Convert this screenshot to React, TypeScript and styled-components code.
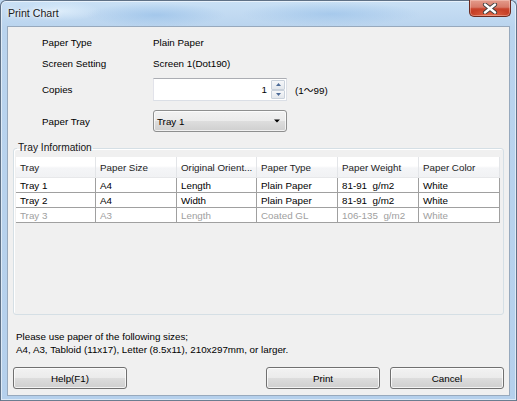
import * as React from 'react';
import styled, { createGlobalStyle } from 'styled-components';

const GlobalStyle = createGlobalStyle`
  html, body {
    margin: 0;
    padding: 0;
  }
  body {
    width: 517px;
    height: 401px;
    overflow: hidden;
    background: #bcd6ef;
  }
`;

interface Tray {
  name: string;
  size: string;
  orient: string;
  type: string;
  weight: string;
  color: string;
  disabled?: boolean;
}

const trays: Tray[] = [
  { name: 'Tray 1', size: 'A4', orient: 'Length', type: 'Plain Paper', weight: '81-91  g/m2', color: 'White' },
  { name: 'Tray 2', size: 'A4', orient: 'Width', type: 'Plain Paper', weight: '81-91  g/m2', color: 'White' },
  { name: 'Tray 3', size: 'A3', orient: 'Length', type: 'Coated GL', weight: '106-135  g/m2', color: 'White', disabled: true },
];

const headers = ['Tray', 'Paper Size', 'Original Orient...', 'Paper Type', 'Paper Weight', 'Paper Color'];

const App: React.FC = () => {
  return (
    <>
      <GlobalStyle />
      <Window>
        <TitleBar>
          <Title>Print Chart</Title>
          <CloseButton>
            <svg width="16" height="11" viewBox="0 0 16 11">
              <path
                d="M3 1.5 L13 9.5 M13 1.5 L3 9.5"
                stroke="#3b3b3b"
                strokeWidth="4.2"
                strokeLinecap="round"
              />
              <path
                d="M3 1.5 L13 9.5 M13 1.5 L3 9.5"
                stroke="#ffffff"
                strokeWidth="2.4"
                strokeLinecap="round"
              />
            </svg>
          </CloseButton>
        </TitleBar>
        <Client>
          <Form>
            <FieldRow $height={18} $top={0}>
              <Label>Paper Type</Label>
              <Label>Plain Paper</Label>
            </FieldRow>
            <FieldRow $height={18} $top={3}>
              <Label>Screen Setting</Label>
              <Label>Screen 1(Dot190)</Label>
            </FieldRow>
            <FieldRow $height={23} $top={6}>
              <Label>Copies</Label>
              <SpinLine>
                <SpinBox>
                  <SpinValue>1</SpinValue>
                  <SpinButtons>
                    <SpinButton>
                      <svg width="5" height="3" viewBox="0 0 5 3">
                        <path d="M0 3 L2.5 0 L5 3 Z" fill="#4c6a97" />
                      </svg>
                    </SpinButton>
                    <SpinButton>
                      <svg width="5" height="3" viewBox="0 0 5 3">
                        <path d="M0 0 L5 0 L2.5 3 Z" fill="#4c6a97" />
                      </svg>
                    </SpinButton>
                  </SpinButtons>
                </SpinBox>
                <Label>(1～99)</Label>
              </SpinLine>
            </FieldRow>
            <FieldRow $height={22} $top={9}>
              <Label>Paper Tray</Label>
              <Combo>
                <span>Tray 1</span>
                <svg width="6" height="4" viewBox="0 0 6 4">
                  <path d="M0 0.5 L6 0.5 L3 3.5 Z" fill="#000" />
                </svg>
              </Combo>
            </FieldRow>
          </Form>

          <GroupBox>
            <Legend>Tray Information</Legend>
            <Table>
              <HeaderRow>
                {headers.map((h) => (
                  <HeaderCell key={h}>{h}</HeaderCell>
                ))}
              </HeaderRow>
              {trays.map((t) => (
                <Row key={t.name} $disabled={t.disabled}>
                  <Cell>{t.name}</Cell>
                  <Cell>{t.size}</Cell>
                  <Cell>{t.orient}</Cell>
                  <Cell>{t.type}</Cell>
                  <Cell>{t.weight}</Cell>
                  <Cell>{t.color}</Cell>
                </Row>
              ))}
            </Table>
          </GroupBox>

          <Note>
            Please use paper of the following sizes;
            <br />
            A4, A3, Tabloid (11x17), Letter (8.5x11), 210x297mm, or larger.
          </Note>

          <ButtonBar>
            <Button>Help(F1)</Button>
            <Spacer />
            <Button>Print</Button>
            <Button>Cancel</Button>
          </ButtonBar>
        </Client>
      </Window>
    </>
  );
};

export default App;

const Window = styled.div`
  width: 517px;
  height: 401px;
  box-sizing: border-box;
  display: flex;
  flex-direction: column;
  border: 1px solid #5f7186;
  border-bottom-color: #6b7d90;
  border-radius: 6px 6px 0 0;
  box-shadow: inset 0 0 0 1px rgba(255, 255, 255, 0.55);
  background:
    radial-gradient(ellipse 70px 12px at 155px 14px, rgba(140, 185, 230, 0.55), transparent),
    radial-gradient(ellipse 90px 12px at 330px 13px, rgba(140, 185, 230, 0.5), transparent),
    radial-gradient(ellipse 40px 10px at 60px 10px, rgba(225, 240, 252, 0.8), transparent),
    linear-gradient(180deg, #c9e0f5 0%, #bad4ee 26px, #b5d0ec 100%);
  font-family: 'Liberation Sans', Arial, 'Noto Sans CJK JP', sans-serif;
  font-size: 9.8px;
  color: #000;
`;

const TitleBar = styled.div`
  height: 25px;
  display: flex;
  align-items: flex-start;
  justify-content: space-between;
  padding-left: 7px;
  padding-right: 5px;
`;

const Title = styled.div`
  line-height: 24px;
  font-size: 10.6px;
  color: #1b1b1b;
  text-shadow: 0 0 6px rgba(255, 255, 255, 0.95), 0 0 3px rgba(255, 255, 255, 0.9);
`;

const CloseButton = styled.div`
  width: 42px;
  height: 17px;
  margin-top: -1px;
  box-sizing: border-box;
  display: flex;
  align-items: center;
  justify-content: center;
  border: 1px solid #6b2a20;
  border-top: none;
  border-radius: 0 0 5px 5px;
  background:
    radial-gradient(ellipse 22px 7px at 50% 100%, rgba(255, 150, 110, 0.6), transparent),
    linear-gradient(180deg, #e49c8c 0%, #d77a68 45%, #c9452d 55%, #c0341c 100%);
  box-shadow: inset 0 0 0 1px rgba(255, 220, 210, 0.4);
`;

const Client = styled.div`
  flex: 1;
  margin: 0 6px 4px 6px;
  border: 1px solid #97a9bd;
  background: #f0f0f0;
  display: flex;
  flex-direction: column;
  padding: 6px 5px 6px 5px;
`;

const Form = styled.div`
  padding-left: 29px;
  display: flex;
  flex-direction: column;
`;

const FieldRow = styled.div<{ $height: number; $top: number }>`
  display: grid;
  grid-template-columns: 111px auto;
  align-items: center;
  height: ${(p) => p.$height}px;
  margin-top: ${(p) => p.$top}px;
`;

const Label = styled.span`
  white-space: nowrap;
`;

const SpinLine = styled.div`
  display: flex;
  align-items: center;
  gap: 8px;
`;

const SpinBox = styled.div`
  width: 134px;
  height: 23px;
  box-sizing: border-box;
  display: flex;
  align-items: stretch;
  background: #fff;
  border: 1px solid #dbdfe6;
  border-top-color: #abadb3;
  border-left-color: #e2e3ea;
  padding: 1px 1px 1px 0;
`;

const SpinValue = styled.div`
  flex: 1;
  display: flex;
  align-items: center;
  justify-content: flex-end;
  padding-right: 4px;
`;

const SpinButtons = styled.div`
  width: 14px;
  display: flex;
  flex-direction: column;
`;

const SpinButton = styled.div`
  flex: 1;
  display: flex;
  align-items: center;
  justify-content: center;
  border: 1px solid #c9d1db;
  border-radius: 1px;
  background: linear-gradient(180deg, #f6f7f9, #e3e7ec);
`;

const Combo = styled.div`
  width: 134px;
  height: 22px;
  box-sizing: border-box;
  display: flex;
  align-items: center;
  justify-content: space-between;
  padding: 0 6px 0 3px;
  border: 1px solid #8e8f8f;
  border-radius: 3px;
  background: linear-gradient(180deg, #f2f2f2 0%, #ebebeb 50%, #dddddd 51%, #cfcfcf 100%);
  box-shadow: inset 0 0 0 1px rgba(255, 255, 255, 0.7);
`;

const GroupBox = styled.fieldset`
  margin: 10px 0 0 0;
  padding: 3px 2px 0 1px;
  min-width: 0;
  height: 173px;
  box-sizing: border-box;
  border: 1px solid #d5dfe5;
  border-radius: 3px;
  box-shadow: inset 1px 1px 0 #fff;
`;

const Legend = styled.legend`
  margin-left: 2px;
  padding: 0 1px;
  line-height: 12px;
  font-size: 10.2px;
  color: #151515;
`;

const Table = styled.div`
  width: 484px;
  margin-left: 1px;
  display: flex;
  flex-direction: column;
`;

const columns = 'grid-template-columns: 80px 81px 80px 81px 81px 81px;';

const HeaderRow = styled.div`
  display: grid;
  ${columns}
  height: 20px;
  background: linear-gradient(180deg, #ffffff 0%, #ffffff 45%, #f4f5f7 55%, #f1f2f4 100%);
  border-bottom: 1px solid #e7e8ea;
`;

const HeaderCell = styled.div`
  display: flex;
  align-items: center;
  padding-left: 4px;
  border-right: 1px solid #e3e5e8;
  white-space: nowrap;
  overflow: hidden;
  color: #1e1e1e;
`;

const Row = styled.div<{ $disabled?: boolean }>`
  display: grid;
  ${columns}
  height: 14px;
  background: #fff;
  border-bottom: 1px solid #a0a0a0;
  color: ${(p) => (p.$disabled ? '#a0a0a0' : '#000')};
`;

const Cell = styled.div`
  display: flex;
  align-items: center;
  padding-left: 4px;
  border-right: 1px solid #a0a0a0;
  white-space: pre;
  overflow: hidden;
`;

const Note = styled.div`
  margin-top: 15px;
  padding-left: 3px;
  line-height: 13px;
`;

const ButtonBar = styled.div`
  margin-top: auto;
  display: flex;
  gap: 10px;
`;

const Spacer = styled.div`
  flex: 1;
`;

const Button = styled.div`
  width: 114px;
  height: 22px;
  box-sizing: border-box;
  display: flex;
  align-items: center;
  justify-content: center;
  border: 1px solid #707070;
  border-radius: 3px;
  background: linear-gradient(180deg, #f2f2f2 0%, #ebebeb 50%, #dddddd 51%, #cfcfcf 100%);
  box-shadow: inset 0 0 0 1px rgba(255, 255, 255, 0.75);
`;
